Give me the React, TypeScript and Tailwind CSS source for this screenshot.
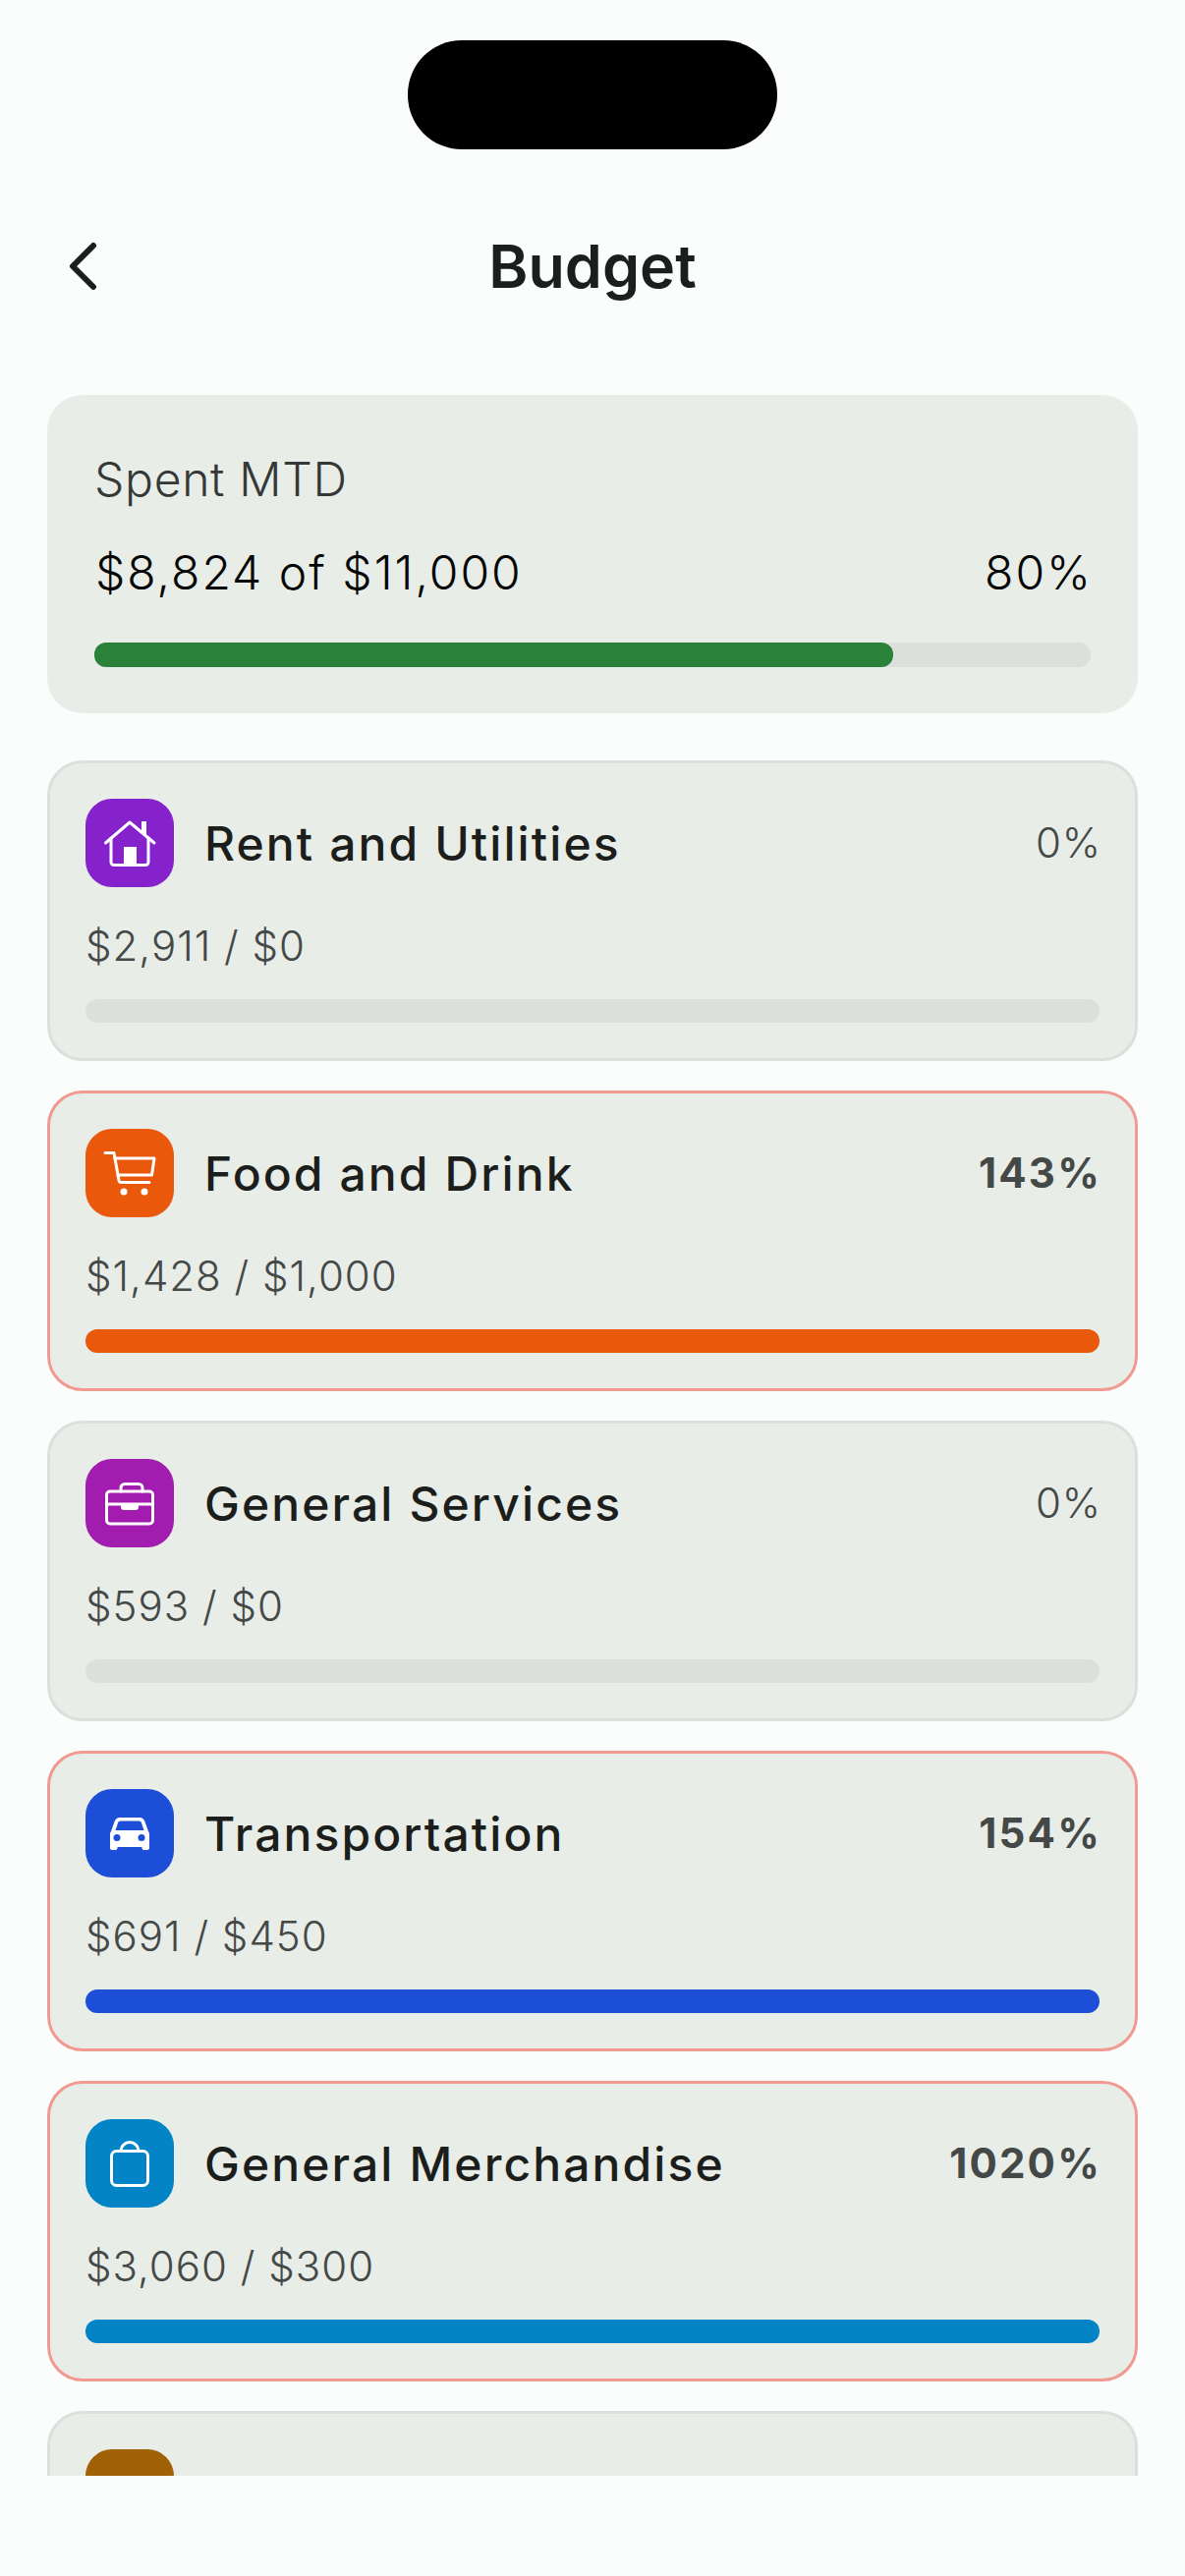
const FONT = "font-['Inter','Liberation_Sans',sans-serif]";

function HomeIcon() {
  return (
    <svg viewBox="0 0 90 90" className="h-[90px] w-[90px]" fill="none" stroke="white" strokeWidth="3" strokeLinecap="round" strokeLinejoin="round">
      <path d="M20.5 45 45 24l25 21" />
      <path d="M26 40v24.5a3 3 0 0 0 3 3h32a3 3 0 0 0 3-3V40" />
      <path d="M59.5 36V23" strokeWidth="5" strokeLinecap="butt" />
      <rect x="39" y="49" width="13" height="18" fill="white" stroke="none" />
    </svg>
  );
}

function CartIcon() {
  return (
    <svg viewBox="0 0 90 90" className="h-[90px] w-[90px]" fill="none" stroke="white" strokeWidth="3" strokeLinecap="round" strokeLinejoin="round">
      <path d="M20 24.5h9l5 28a2.5 2.5 0 0 0 2.500 2h28.500" />
      <path d="M30 30h40l-2.500 17H33" />
      <circle cx="39" cy="64" r="3.500" fill="white" stroke="none" />
      <circle cx="60" cy="64" r="3.500" fill="white" stroke="none" />
    </svg>
  );
}

function BriefcaseIcon() {
  return (
    <svg viewBox="0 0 90 90" className="h-[90px] w-[90px]" fill="none" stroke="white" strokeWidth="3" strokeLinecap="round" strokeLinejoin="round">
      <rect x="21.500" y="33" width="47" height="33" rx="3.500" />
      <path d="M21.500 46h47" />
      <path d="M36 33v-3.500a4 4 0 0 1 4-4h14a4 4 0 0 1 4 4V33" />
      <path d="M36 46h18v3a3 3 0 0 1-3 3H39a3 3 0 0 1-3-3z" fill="white" stroke="none" />
    </svg>
  );
}

function CarIcon() {
  return (
    <svg viewBox="0 0 90 90" className="h-[90px] w-[90px]">
      <path
        fillRule="evenodd"
        fill="white"
        d="M35 29h20c2.500 0 4.500 1.500 5.300 3.800L64 43c.7 1 1 2 1 3.500V60c0 1.200-.8 2-2 2h-3.500c-1.200 0-2-.8-2-2v-1H32.500v1c0 1.200-.8 2-2 2H27c-1.200 0-2-.8-2-2V46.500c0-1.500.3-2.500 1-3.500l3.700-10.200C30.500 30.500 32.500 29 35 29zM35.500 32.500c-1.200 0-2 .7-2.400 1.800L30.500 42h29l-2.600-7.700c-.4-1.100-1.200-1.800-2.400-1.800z"
      />
      <circle cx="32" cy="49.500" r="3.500" fill="#1d4ed8" />
      <circle cx="57" cy="49.500" r="3.500" fill="#1d4ed8" />
    </svg>
  );
}

function BagIcon() {
  return (
    <svg viewBox="0 0 90 90" className="h-[90px] w-[90px]" fill="none" stroke="white" strokeWidth="3" strokeLinecap="round" strokeLinejoin="round">
      <rect x="26.500" y="32.500" width="37" height="35" rx="5" />
      <path d="M36 32.500a9 9 0 0 1 18 0" />
    </svg>
  );
}

function FilmIcon() {
  return (
    <svg viewBox="0 0 90 90" className="h-[90px] w-[90px]">
      <rect x="18" y="28" width="54" height="36" rx="3" fill="white" />
    </svg>
  );
}

const categories = [
  { name: "Rent and Utilities", amount: "$2,911 / $0", pct: "0%", over: false, icon: <HomeIcon />, iconBg: "bg-[#8622cc]", barBg: "" },
  { name: "Food and Drink", amount: "$1,428 / $1,000", pct: "143%", over: true, icon: <CartIcon />, iconBg: "bg-[#ea580c]", barBg: "bg-[#ea580c]" },
  { name: "General Services", amount: "$593 / $0", pct: "0%", over: false, icon: <BriefcaseIcon />, iconBg: "bg-[#a21caf]", barBg: "" },
  { name: "Transportation", amount: "$691 / $450", pct: "154%", over: true, icon: <CarIcon />, iconBg: "bg-[#1d4ed8]", barBg: "bg-[#1d4ed8]" },
  { name: "General Merchandise", amount: "$3,060 / $300", pct: "1020%", over: true, icon: <BagIcon />, iconBg: "bg-[#0284c7]", barBg: "bg-[#0284c7]" },
];

function CategoryCard({ item }: { item: (typeof categories)[number] }) {
  return (
    <div className={`rounded-[36px] border-[3px] bg-[#e8ede8] p-[36px] ${item.over ? "border-[#f09a92]" : "border-[#dce0dc]"}`}>
      <div className="flex h-[90px] items-center">
        <div className={`h-[90px] w-[90px] shrink-0 rounded-[27px] ${item.iconBg}`}>{item.icon}</div>
        <div className="ml-[31px] pt-[2px] text-[48px] leading-[60px] font-medium tracking-[2.1px] text-[#1c1e1b]">{item.name}</div>
        <div className={`-mr-[2px] ml-auto text-[42px] leading-[60px] text-[#444846] ${item.over ? "font-bold tracking-[2.2px]" : "font-[350] tracking-[0.8px]"}`}>{item.pct}</div>
      </div>
      <div className="mt-[30px] text-[42px] leading-[60px] font-[350] tracking-[1px] text-[#444846]">{item.amount}</div>
      <div className="mt-[24px] h-[24px] rounded-[12px] bg-[#dce0dc]">
        {item.over && <div className={`h-full rounded-[12px] ${item.barBg}`} />}
      </div>
    </div>
  );
}

export default function App() {
  return (
    <div className={`flex h-[2622px] w-[1206px] flex-col bg-[#fbfdfc] pt-[41px] ${FONT}`}>
      {/* Camera cutout */}
      <div className="mx-auto h-[111px] w-[376px] shrink-0 rounded-[55px] bg-black" />

      {/* Header */}
      <div className="relative mt-[59px] flex h-[120px] shrink-0 items-center justify-center">
        <svg viewBox="0 0 36 54" className="absolute top-[33px] left-[66px] h-[54px] w-[36px]" fill="none" stroke="#1c1e1b" strokeWidth="6" strokeLinecap="round" strokeLinejoin="round">
          <path d="M29 6 8 27l21 21" />
        </svg>
        <h1 className="text-[61px] leading-[72px] font-semibold text-[#1c1e1b]">Budget</h1>
      </div>

      {/* Scrollable list, cut off above the bottom edge */}
      <div className="mt-[71px] h-[2118px] shrink-0 overflow-hidden px-[48px]">
        <div className="rounded-[36px] bg-[#e8ede8] px-[48px] pt-[56px] pb-[47px]">
          <div className="text-[48px] leading-[60px] font-[350] tracking-[0.7px] text-[#343836]">Spent MTD</div>
          <div className="mt-[35px] flex items-center justify-between text-[48px] leading-[60px] font-[350] tracking-[2px] text-[#050605]">
            <span className="ml-[1px]">$8,824 of $11,000</span>
            <span className="-mr-[2px]">80%</span>
          </div>
          <div className="mt-[41px] h-[25px] rounded-[12px] bg-[#dce0dc]">
            <div className="h-full w-[80.2%] rounded-[12px] bg-[#2a8139]" />
          </div>
        </div>

        <div className="mt-[48px] flex flex-col gap-[30px]">
          {categories.map((item) => (
            <CategoryCard key={item.name} item={item} />
          ))}
          <div className="rounded-[36px] border-[3px] border-[#dce0dc] bg-[#e8ede8] p-[36px]">
            <div className="flex h-[90px] items-center">
              <div className="h-[90px] w-[90px] shrink-0 rounded-[27px] bg-[#a16207]">
                <FilmIcon />
              </div>
              <div className="ml-[31px] pt-[2px] text-[48px] leading-[60px] font-medium tracking-[2.1px] text-[#1c1e1b]">Entertainment</div>
            </div>
          </div>
        </div>
      </div>
    </div>
  );
}
